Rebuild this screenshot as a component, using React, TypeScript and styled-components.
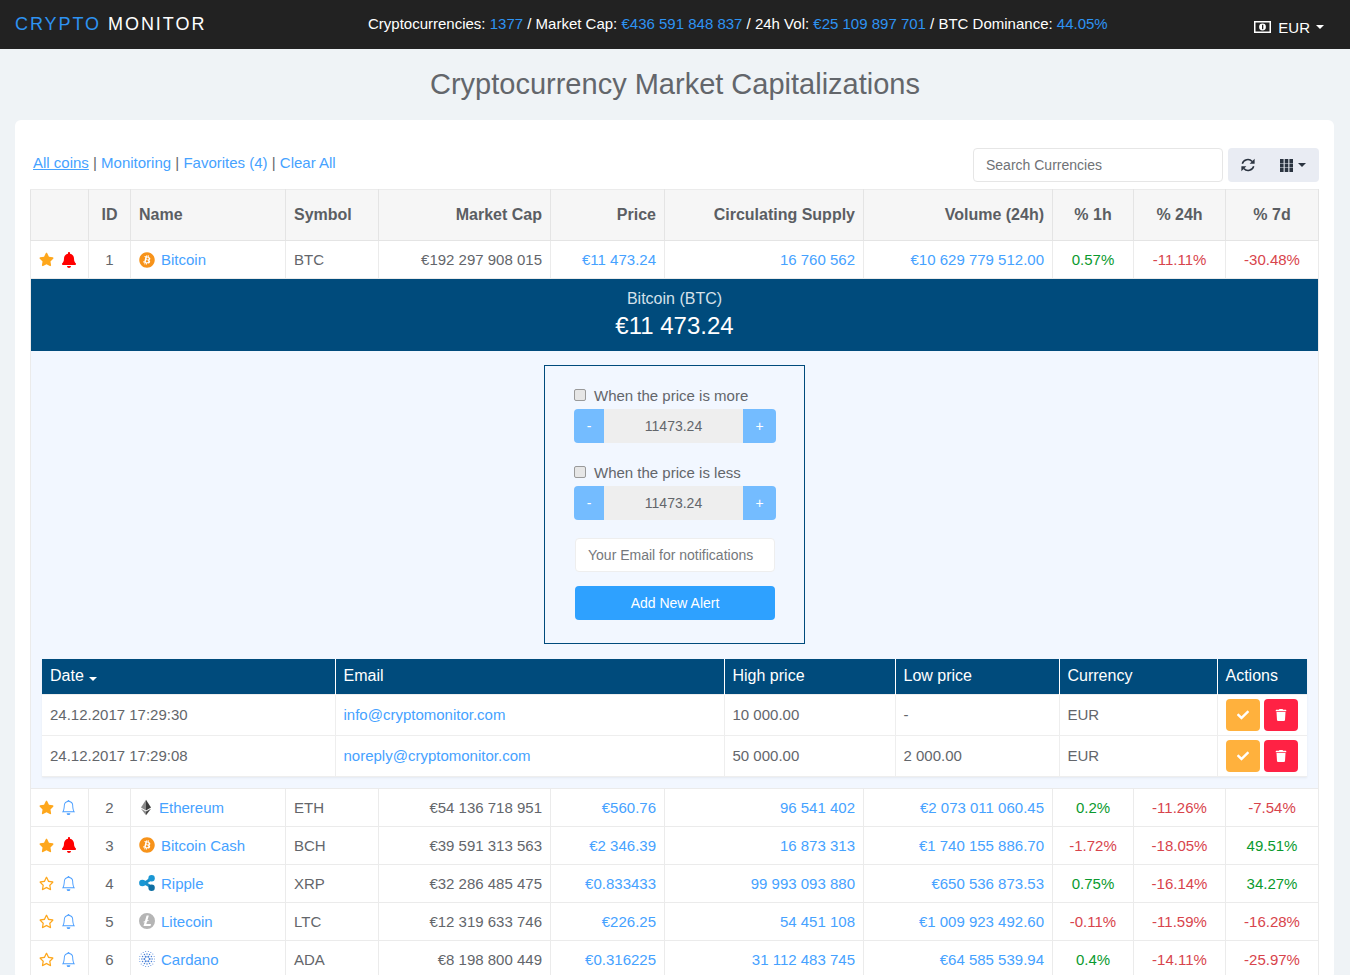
import React from 'react';
import styled, { createGlobalStyle } from 'styled-components';
import { FaStar, FaRegStar, FaBell, FaCheck, FaTrash, FaBitcoin } from 'react-icons/fa';
import { BsBell } from 'react-icons/bs';
import { SiLitecoin } from 'react-icons/si';

const GlobalStyle = createGlobalStyle`
  html, body {
    margin: 0;
    height: 975px;
    overflow: hidden;
    background: #eff3f6;
    color: #63666b;
    font-family: "Liberation Sans", Arial, sans-serif;
    font-size: 15px;
  }
  * { box-sizing: border-box; }
`;

const BLUE = '#46a2ff';
const NAVY = '#004b7c';

const Navbar = styled.header`
  height: 49px;
  background: #222;
  display: flex;
  align-items: center;
  padding: 0 26px 0 15px;
  color: #fff;
`;

const Logo = styled.div`
  width: 353px;
  font-size: 18px;
  letter-spacing: 1.95px;
  white-space: nowrap;
  padding-bottom: 1px;
  span { color: #2e93f2; }
`;

const Stats = styled.div`
  flex: 1;
  font-size: 15px;
  white-space: nowrap;
  padding-bottom: 3px;
  span { color: #2e93f2; }
`;

const Currency = styled.div`
  display: flex;
  align-items: center;
  gap: 7px;
  font-size: 15px;
  padding-top: 5px;
`;

const Caret = styled.i<{ $color?: string }>`
  display: inline-block;
  width: 0;
  height: 0;
  margin-left: 5px;
  border-top: 4px solid ${p => p.$color || '#fff'};
  border-left: 4px solid transparent;
  border-right: 4px solid transparent;
`;

const CurrencyCaret = styled(Caret)`
  margin-left: -1px;
`;

const Title = styled.h1`
  margin: 0;
  height: 71px;
  text-align: center;
  font-size: 29px;
  line-height: 70px;
  font-weight: 400;
  color: #63666b;
`;

const Card = styled.main`
  margin: 0 16px 0 15px;
  padding: 28px 15px 0;
  background: #fff;
  border-radius: 6px;
`;

const Toolbar = styled.div`
  display: flex;
  align-items: flex-start;
  height: 41px;
`;

const Filters = styled.div`
  flex: 1;
  padding: 6px 0 0 3px;
  a { color: ${BLUE}; text-decoration: none; }
  a.active { text-decoration: underline; }
`;

const SearchInput = styled.div`
  width: 250px;
  height: 34px;
  border: 1px solid #e6e6e6;
  border-radius: 4px;
  padding: 0 12px;
  line-height: 33px;
  font-size: 14px;
  color: #6f7276;
`;

const ToolButtons = styled.div`
  width: 91px;
  height: 34px;
  margin-left: 5px;
  background: #e9ecf3;
  border-radius: 4px;
  display: flex;
  align-items: center;
  padding-left: 13px;
  color: #2b3440;
  svg:first-child { margin-right: 25px; }
`;

const GridTable = styled.table`
  width: 1289px;
  table-layout: fixed;
  border-collapse: collapse;
  border: 1px solid #ebebeb;
`;

const HeadCell = styled.th<{ $align?: string }>`
  height: 51px;
  padding: 0 8px;
  background: #f6f6f6;
  border: 1px solid #e4e4e4;
  border-top-color: #ebebeb;
  font-size: 16px;
  font-weight: 700;
  color: #5b5e63;
  text-align: ${p => p.$align || 'left'};
`;

const Cell = styled.td<{ $align?: string; $color?: string }>`
  height: 38px;
  padding: 0 8px;
  border: 1px solid #ebebeb;
  white-space: nowrap;
  text-align: ${p => p.$align || 'left'};
  color: ${p => p.$color || 'inherit'};
  a { color: ${BLUE}; text-decoration: none; }
`;

const MarkCell = styled(Cell)`
  padding: 0 0 2px 8px;
  svg { vertical-align: middle; }
  svg:first-child { margin-right: 7px; }
`;

const NameLink = styled.a`
  display: flex;
  align-items: center;
  gap: 6px;
  color: ${BLUE};
`;

const CoinSlot = styled.span<{ $narrow?: boolean }>`
  width: ${p => (p.$narrow ? '14px' : '16px')};
  height: 18px;
  display: inline-flex;
  align-items: center;
  justify-content: center;
`;

const DetailCell = styled.td`
  padding: 0;
  background: #f2f7ff;
  border: 1px solid #ebebeb;
  border-top: 0;
`;

const Banner = styled.div`
  height: 72px;
  background: ${NAVY};
  text-align: center;
  color: #fff;
  padding-top: 11px;
`;

const BannerName = styled.div`
  font-size: 16px;
  line-height: 18px;
  color: #d5e1ea;
`;

const BannerPrice = styled.div`
  margin-top: 4px;
  font-size: 24px;
  line-height: 28px;
`;

const AlertBox = styled.div`
  width: 261px;
  height: 279px;
  margin: 14px auto 15px;
  padding: 19px 29px 0;
  border: 1px solid ${NAVY};
`;

const CheckRow = styled.label`
  display: flex;
  align-items: center;
  height: 21px;
  gap: 8px;
  font-size: 15px;
`;

const Check = styled.span`
  width: 12px;
  height: 12px;
  background: #e6e6e6;
  border: 1px solid #9a9a9a;
  border-radius: 2px;
  margin-top: -1px;
`;

const Stepper = styled.div`
  display: flex;
  width: 202px;
  height: 34px;
  margin: 3px 0 19px;
  border-radius: 4px;
  overflow: hidden;
`;

const StepButton = styled.div<{ $wide?: boolean }>`
  width: ${p => (p.$wide ? '33px' : '30px')};
  background: #74bcff;
  color: #fff;
  font-size: 14px;
  text-align: center;
  line-height: 34px;
`;

const StepValue = styled.div`
  flex: 1;
  background: #eee;
  font-size: 14px;
  text-align: center;
  line-height: 34px;
`;

const EmailInput = styled.div`
  width: 200px;
  height: 34px;
  margin: -1px 0 14px 1px;
  background: #fff;
  border: 1px solid #eee;
  border-radius: 4px;
  padding: 0 12px;
  font-size: 14px;
  line-height: 32px;
  color: #75787c;
  white-space: nowrap;
`;

const AddButton = styled.div`
  width: 200px;
  height: 34px;
  margin-left: 1px;
  background: #2ea1ff;
  border-radius: 4px;
  color: #fff;
  font-size: 14px;
  line-height: 34px;
  text-align: center;
`;

const AlertsWrap = styled.div`
  padding: 0 10px 11px 11px;
`;

const AlertsTable = styled.table`
  width: 1265px;
  table-layout: fixed;
  border-collapse: collapse;
  background: #fff;
  box-shadow: 0 1px 2px rgba(0, 0, 0, 0.06);
`;

const AlertHead = styled.th`
  height: 35px;
  padding: 0 8px;
  background: ${NAVY};
  border-left: 1px solid #fff;
  color: #fff;
  font-size: 16px;
  font-weight: 400;
  text-align: left;
  &:first-child { border-left: 0; }
`;

const AlertCell = styled.td`
  height: 41px;
  padding: 0 8px;
  border: 1px solid #eee;
  a { color: ${BLUE}; text-decoration: none; }
  &:first-child { border-left: 0; }
  &:last-child { border-right: 0; }
`;

const ActionRow = styled.div`
  display: flex;
  gap: 4px;
`;

const ActionButton = styled.div<{ $bg: string }>`
  width: 34px;
  height: 32px;
  border-radius: 4px;
  background: ${p => p.$bg};
  color: #fff;
  display: flex;
  align-items: center;
  justify-content: center;
  font-size: 12px;
`;

const widths = [58, 42, 155, 93, 172, 114, 199, 189, 81, 92, 93];

const heads: [string, string?][] = [
  [''], ['ID', 'center'], ['Name'], ['Symbol'], ['Market Cap', 'right'], ['Price', 'right'],
  ['Circulating Supply', 'right'], ['Volume (24h)', 'right'], ['% 1h', 'center'], ['% 24h', 'center'], ['% 7d', 'center'],
];

function EthereumCoin() {
  return (
    <svg width="10" height="17" viewBox="0 0 11 17">
      <path d="M5.5 0L0 8.6l5.5 3.2z" fill="#8a8a8a" />
      <path d="M5.5 0L11 8.6l-5.5 3.2z" fill="#3c3c3c" />
      <path d="M0 9.8L5.5 17v-4z" fill="#8a8a8a" />
      <path d="M11 9.8L5.5 17v-4z" fill="#454545" />
    </svg>
  );
}

function RippleCoin() {
  return (
    <svg width="16" height="16" viewBox="0 0 16 16">
      <path d="M3.4 8C7 8 9.5 6 12.4 3.4M3.4 8c3.6 0 6.1 2 9 4.6" stroke="#1a8fc9" strokeWidth="3" fill="none" />
      <circle cx="3.4" cy="8" r="3.3" fill="#1a97d4" />
      <circle cx="12.6" cy="3.2" r="3.2" fill="#1a97d4" />
      <circle cx="12.6" cy="12.8" r="3.2" fill="#0f6fa3" />
    </svg>
  );
}

function CardanoCoin() {
  const dots = [];
  for (let ring = 0; ring < 3; ring++) {
    const count = 6 + ring * 6;
    for (let i = 0; i < count; i++) {
      const a = (i / count) * Math.PI * 2;
      const r = 2.6 + ring * 2.5;
      dots.push(<circle key={`${ring}-${i}`} cx={8 + Math.cos(a) * r} cy={8 + Math.sin(a) * r} r={1 - ring * 0.25} fill="#4a82d8" />);
    }
  }
  return <svg width="16" height="16" viewBox="0 0 16 16">{dots}</svg>;
}

function RefreshIcon() {
  return (
    <svg width="14" height="14" viewBox="0 0 14 14" fill="none">
      <path d="M1.3 5.8A5.8 5.8 0 0 1 11.2 3.6" stroke="#2b3440" strokeWidth="1.5" />
      <path d="M13.6 .8v5H8.6z" fill="#2b3440" />
      <path d="M12.7 8.2A5.8 5.8 0 0 1 2.8 10.4" stroke="#2b3440" strokeWidth="1.5" />
      <path d="M.4 13.2v-5h5z" fill="#2b3440" />
    </svg>
  );
}

function ColumnsIcon() {
  return (
    <svg width="13" height="13" viewBox="0 0 13 13" fill="#2b3440">
      <path d="M0 0h3.6v4H0zM4.7 0h3.6v4H4.7zM9.4 0H13v4H9.4zM0 4.5h3.6v4H0zM4.7 4.5h3.6v4H4.7zM9.4 4.5H13v4H9.4zM0 9h3.6v4H0zM4.7 9h3.6v4H4.7zM9.4 9H13v4H9.4z" />
    </svg>
  );
}

function MoneyIcon() {
  return (
    <svg width="17" height="12" viewBox="0 0 17 12">
      <rect width="17" height="12" fill="#fff" />
      <rect x="1.5" y="1.5" width="14" height="9" fill="#222" />
      <circle cx="8.5" cy="6" r="3.4" fill="#fff" />
      <rect x="8" y="3.8" width="1.3" height="4.4" fill="#222" />
    </svg>
  );
}

type Coin = {
  id: number; name: string; symbol: string; cap: string; price: string; supply: string; volume: string;
  h1: string; h24: string; d7: string; fav: boolean; bell: boolean; icon: React.ReactNode; narrow?: boolean;
};

const btc = <FaBitcoin size={16} color="#f7931a" />;

const coins: Coin[] = [
  { id: 1, name: 'Bitcoin', symbol: 'BTC', cap: '€192 297 908 015', price: '€11 473.24', supply: '16 760 562', volume: '€10 629 779 512.00', h1: '0.57%', h24: '-11.11%', d7: '-30.48%', fav: true, bell: true, icon: btc },
  { id: 2, name: 'Ethereum', symbol: 'ETH', cap: '€54 136 718 951', price: '€560.76', supply: '96 541 402', volume: '€2 073 011 060.45', h1: '0.2%', h24: '-11.26%', d7: '-7.54%', fav: true, bell: false, icon: <EthereumCoin />, narrow: true },
  { id: 3, name: 'Bitcoin Cash', symbol: 'BCH', cap: '€39 591 313 563', price: '€2 346.39', supply: '16 873 313', volume: '€1 740 155 886.70', h1: '-1.72%', h24: '-18.05%', d7: '49.51%', fav: true, bell: true, icon: btc },
  { id: 4, name: 'Ripple', symbol: 'XRP', cap: '€32 286 485 475', price: '€0.833433', supply: '99 993 093 880', volume: '€650 536 873.53', h1: '0.75%', h24: '-16.14%', d7: '34.27%', fav: false, bell: false, icon: <RippleCoin /> },
  { id: 5, name: 'Litecoin', symbol: 'LTC', cap: '€12 319 633 746', price: '€226.25', supply: '54 451 108', volume: '€1 009 923 492.60', h1: '-0.11%', h24: '-11.59%', d7: '-16.28%', fav: false, bell: false, icon: <SiLitecoin size={16} color="#b5b5b5" /> },
  { id: 6, name: 'Cardano', symbol: 'ADA', cap: '€8 198 800 449', price: '€0.316225', supply: '31 112 483 745', volume: '€64 585 539.94', h1: '0.4%', h24: '-14.11%', d7: '-25.97%', fav: false, bell: false, icon: <CardanoCoin /> },
];

const alerts = [
  { date: '24.12.2017 17:29:30', email: 'info@cryptomonitor.com', high: '10 000.00', low: '-' },
  { date: '24.12.2017 17:29:08', email: 'noreply@cryptomonitor.com', high: '50 000.00', low: '2 000.00' },
];

const alertWidths = [293, 389, 171, 164, 158, 90];

const pctColor = (v: string) => (v.startsWith('-') ? '#d8444c' : '#0a9a2e');

function CoinRow({ coin }: { coin: Coin }) {
  return (
    <tr>
      <MarkCell>
        {coin.fav ? <FaStar size={15} color="#fea71c" /> : <FaRegStar size={15} color="#fea71c" />}
        {coin.bell ? <FaBell size={16} color="#f00" /> : <BsBell size={15} color="#4a9eff" />}
      </MarkCell>
      <Cell $align="center">{coin.id}</Cell>
      <Cell>
        <NameLink>
          <CoinSlot $narrow={coin.narrow}>{coin.icon}</CoinSlot>
          {coin.name}
        </NameLink>
      </Cell>
      <Cell>{coin.symbol}</Cell>
      <Cell $align="right">{coin.cap}</Cell>
      <Cell $align="right"><a>{coin.price}</a></Cell>
      <Cell $align="right"><a>{coin.supply}</a></Cell>
      <Cell $align="right"><a>{coin.volume}</a></Cell>
      <Cell $align="center" $color={pctColor(coin.h1)}>{coin.h1}</Cell>
      <Cell $align="center" $color={pctColor(coin.h24)}>{coin.h24}</Cell>
      <Cell $align="center" $color={pctColor(coin.d7)}>{coin.d7}</Cell>
    </tr>
  );
}

function PriceAlert({ label }: { label: string }) {
  return (
    <>
      <CheckRow><Check />{label}</CheckRow>
      <Stepper>
        <StepButton>-</StepButton>
        <StepValue>11473.24</StepValue>
        <StepButton $wide>+</StepButton>
      </Stepper>
    </>
  );
}

function CoinDetail() {
  return (
    <tr>
      <DetailCell colSpan={11}>
        <Banner>
          <BannerName>Bitcoin (BTC)</BannerName>
          <BannerPrice>€11 473.24</BannerPrice>
        </Banner>
        <AlertBox>
          <PriceAlert label="When the price is more" />
          <PriceAlert label="When the price is less" />
          <EmailInput>Your Email for notifications</EmailInput>
          <AddButton>Add New Alert</AddButton>
        </AlertBox>
        <AlertsWrap>
          <AlertsTable>
            <colgroup>
              {alertWidths.map((w, i) => <col key={i} width={w} />)}
            </colgroup>
            <thead>
              <tr>
                <AlertHead>Date<Caret /></AlertHead>
                <AlertHead>Email</AlertHead>
                <AlertHead>High price</AlertHead>
                <AlertHead>Low price</AlertHead>
                <AlertHead>Currency</AlertHead>
                <AlertHead>Actions</AlertHead>
              </tr>
            </thead>
            <tbody>
              {alerts.map(a => (
                <tr key={a.date}>
                  <AlertCell>{a.date}</AlertCell>
                  <AlertCell><a>{a.email}</a></AlertCell>
                  <AlertCell>{a.high}</AlertCell>
                  <AlertCell>{a.low}</AlertCell>
                  <AlertCell>EUR</AlertCell>
                  <AlertCell>
                    <ActionRow>
                      <ActionButton $bg="#ffb13d"><FaCheck /></ActionButton>
                      <ActionButton $bg="#ff2244"><FaTrash /></ActionButton>
                    </ActionRow>
                  </AlertCell>
                </tr>
              ))}
            </tbody>
          </AlertsTable>
        </AlertsWrap>
      </DetailCell>
    </tr>
  );
}

export default function App() {
  return (
    <>
      <GlobalStyle />
      <Navbar>
        <Logo><span>CRYPTO</span> MONITOR</Logo>
        <Stats>
          Cryptocurrencies: <span>1377</span> / Market Cap: <span>€436 591 848 837</span> / 24h Vol: <span>€25 109 897 701</span> / BTC Dominance: <span>44.05%</span>
        </Stats>
        <Currency><MoneyIcon />EUR<CurrencyCaret /></Currency>
      </Navbar>
      <Title>Cryptocurrency Market Capitalizations</Title>
      <Card>
        <Toolbar>
          <Filters>
            <a className="active">All coins</a> | <a>Monitoring</a> | <a>Favorites (4)</a> | <a>Clear All</a>
          </Filters>
          <SearchInput>Search Currencies</SearchInput>
          <ToolButtons>
            <RefreshIcon />
            <ColumnsIcon />
            <Caret $color="#2b3440" />
          </ToolButtons>
        </Toolbar>
        <GridTable>
          <colgroup>
            {widths.map((w, i) => <col key={i} width={w} />)}
          </colgroup>
          <thead>
            <tr>
              {heads.map(([label, align], i) => <HeadCell key={i} $align={align}>{label}</HeadCell>)}
            </tr>
          </thead>
          <tbody>
            <CoinRow coin={coins[0]} />
            <CoinDetail />
            {coins.slice(1).map(c => <CoinRow key={c.id} coin={c} />)}
          </tbody>
        </GridTable>
      </Card>
    </>
  );
}
